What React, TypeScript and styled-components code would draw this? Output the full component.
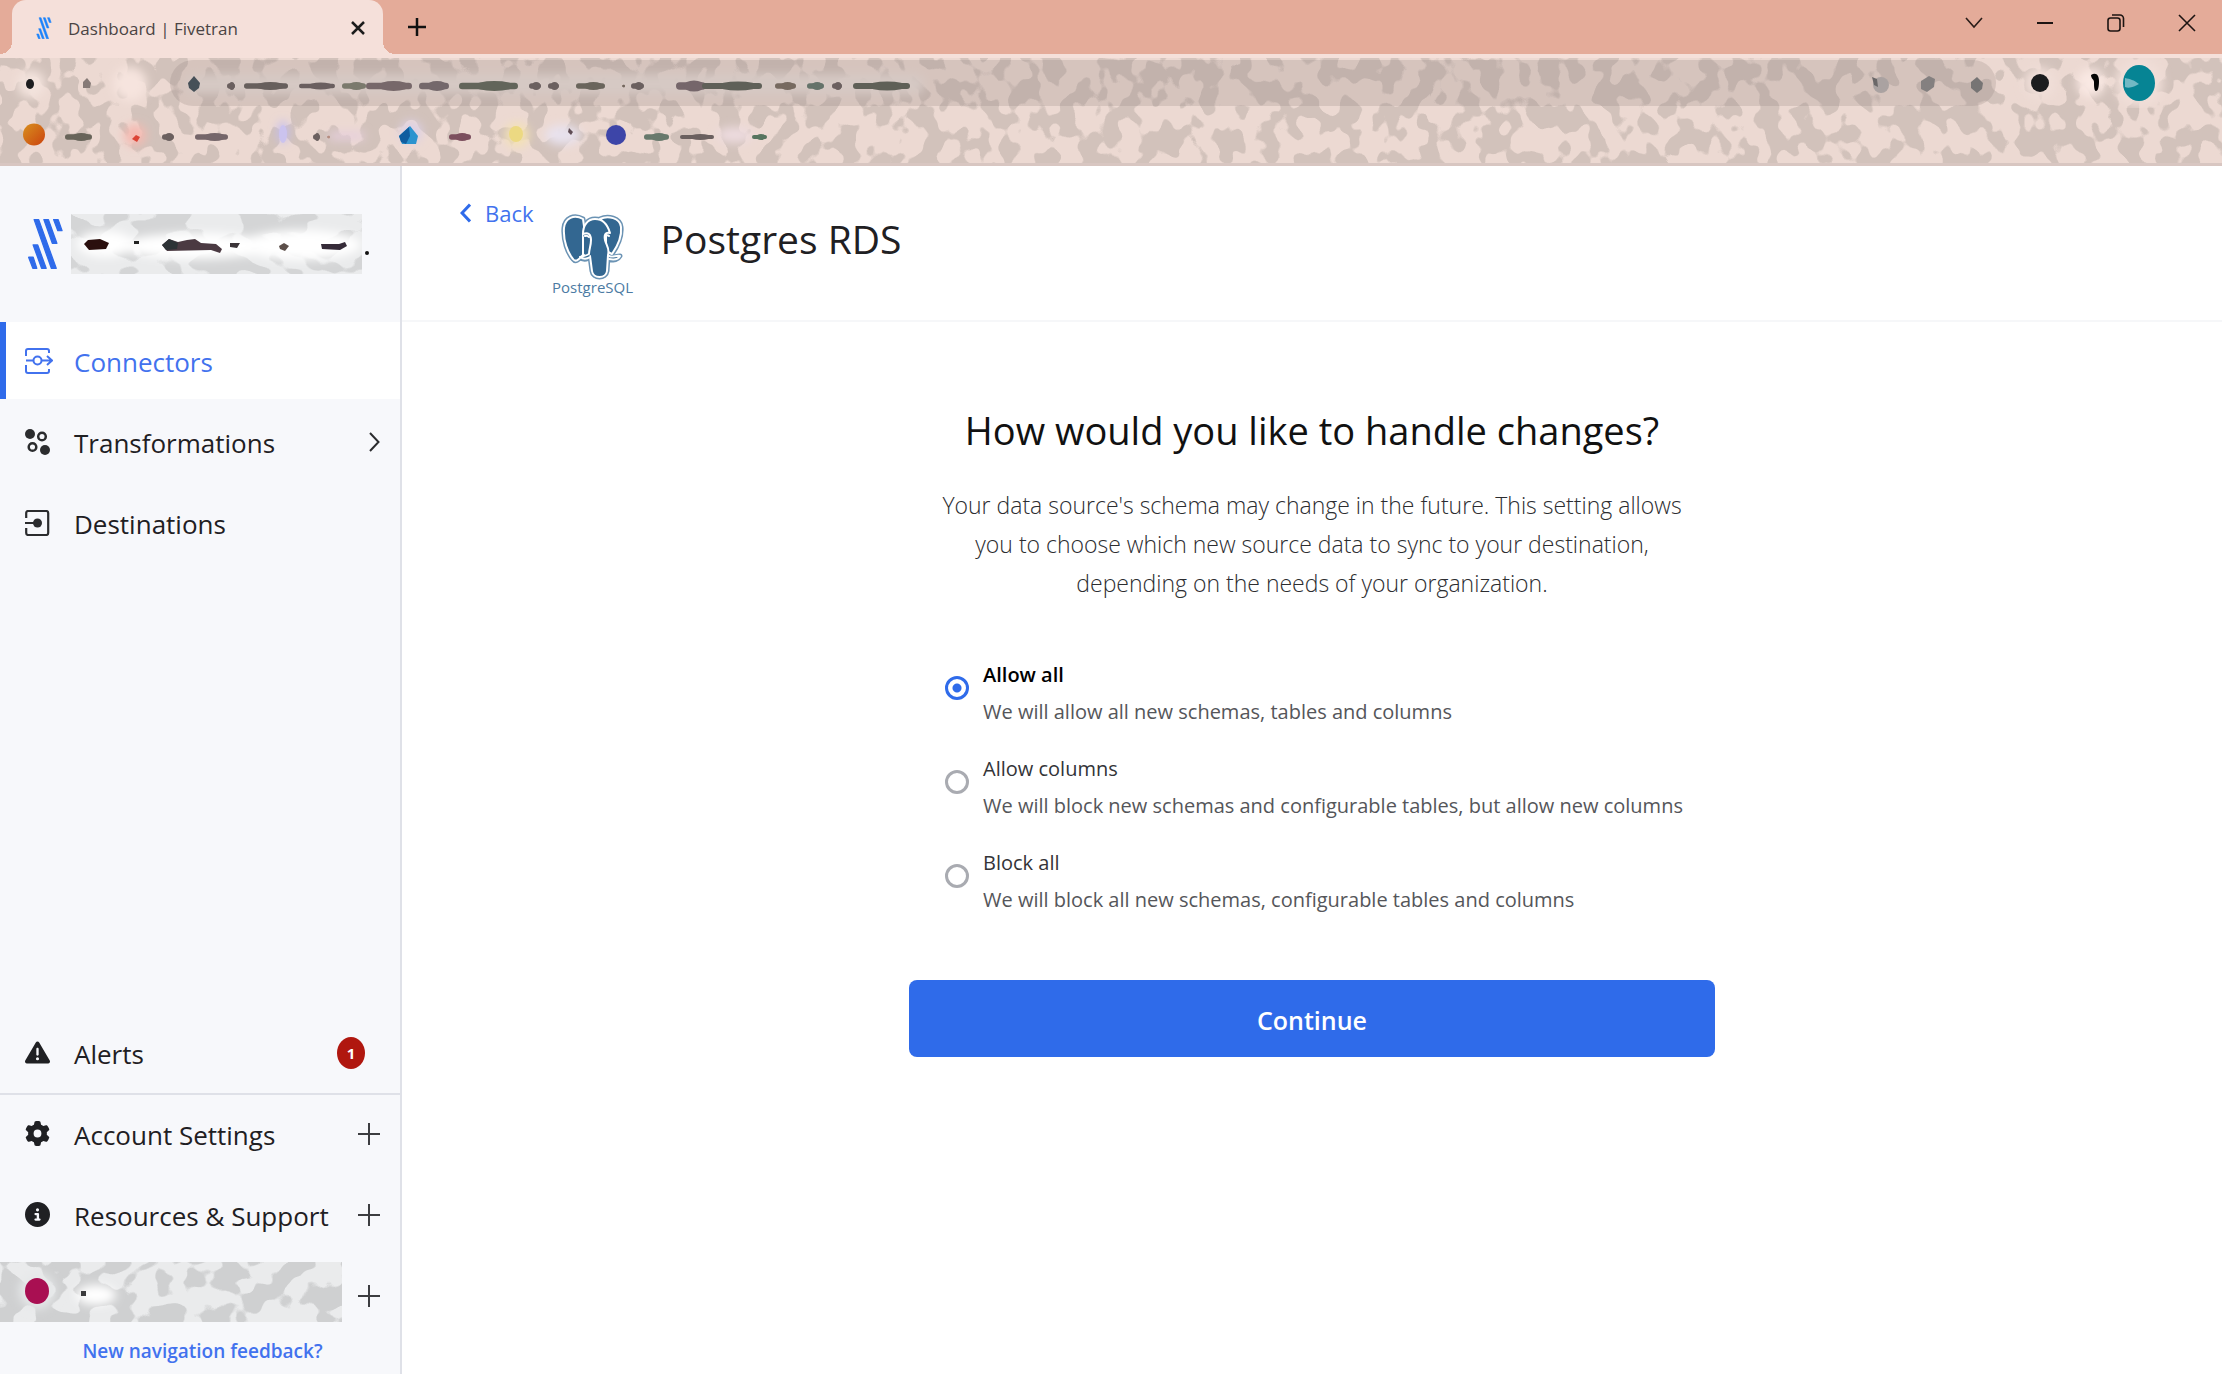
import React, { useState } from 'react';
import styled, { createGlobalStyle } from 'styled-components';
import { FaCircleInfo, FaGear, FaTriangleExclamation } from 'react-icons/fa6';

const color = {
  blue: '#2f6bea',
  link: '#4272ee',
  ink: '#1f2023',
  text: '#55565a',
  side: '#f7f8fb',
  line: '#dfe1e8',
  frame: '#e4ab99',
  tab: '#f5e0da',
};

const GlobalStyle = createGlobalStyle`
  *, *::before, *::after { box-sizing: border-box; }
  body {
    margin: 0;
    background: #fff;
    color: ${color.ink};
    font-family: "Open Sans", "Noto Sans", sans-serif;
  }
  button, input { font: inherit; }
  button { border: 0; background: none; padding: 0; color: inherit; cursor: pointer; }
  a { text-decoration: none; }
  svg { display: block; flex: none; }
`;

const Window = styled.div`
  display: flex;
  flex-direction: column;
  min-height: 100vh;
`;

/* ---------- browser frame ---------- */

const TabStrip = styled.div`
  display: flex;
  height: 58px;
  padding-left: 12px;
  background: ${color.frame};
  border-bottom: 4px solid ${color.tab};
`;

const Tab = styled.div`
  position: relative;
  display: flex;
  align-items: center;
  width: 371px;
  padding: 2px 16px 0 24px;
  gap: 16px;
  border-radius: 14px 14px 0 0;
  background: ${color.tab};
  color: #4a4444;
  font-size: 17px;

  &::before, &::after {
    content: "";
    position: absolute;
    bottom: 0;
    width: 12px;
    height: 12px;
  }
  &::before {
    right: 100%;
    background: radial-gradient(circle at 0 0, transparent 12px, ${color.tab} 12px);
  }
  &::after {
    left: 100%;
    background: radial-gradient(circle at 100% 0, transparent 12px, ${color.tab} 12px);
  }
`;

const TabTitle = styled.span`
  flex: 1;
`;

const IconButton = styled.button`
  display: grid;
  place-items: center;
  width: 18px;
`;

const NewTab = styled(IconButton)`
  width: 68px;
`;

const Controls = styled.div`
  display: flex;
  height: 46px;
  margin-left: auto;
`;

const Control = styled(IconButton)`
  width: 71px;
`;

const Toolbar = styled.div`
  position: relative;
  height: 108px;
  background: #ecd9d2;
  border-bottom: 3px solid #d8c6c1;
  overflow: hidden;
`;

const NoiseLayer = styled.svg`
  position: absolute;
  inset: 0;
  width: 100%;
  height: 100%;
`;

const AddressRow = styled.div`
  position: relative;
  display: flex;
  height: 50px;
`;

const Pill = styled.div`
  position: relative;
  display: flex;
  flex: 1;
  justify-content: space-between;
  margin: 2px 0;
  border-radius: 23px;
  background: rgba(150, 135, 132, 0.26);
  overflow: hidden;
`;

const BookmarkRow = styled.div`
  position: relative;
  height: 55px;
`;

/* ---------- application ---------- */

const Shell = styled.div`
  display: flex;
  flex: 1;
`;

const Sidebar = styled.aside`
  display: flex;
  flex-direction: column;
  flex: none;
  width: 402px;
  padding-bottom: 6px;
  background: ${color.side};
  border-right: 2px solid ${color.line};
`;

const Brand = styled.div`
  display: flex;
  align-items: center;
  gap: 7px;
  height: 156px;
  padding-left: 27px;
`;

const Redacted = styled.div`
  position: relative;
  width: ${(p: { $w: number }) => p.$w}px;
  height: 60px;
  flex: none;
  background: #eaebec;
  overflow: hidden;
`;

const Trailing = styled.span`
  width: 4px;
  height: 4px;
  margin-top: 18px;
  margin-left: -4px;
  border-radius: 2px;
  background: #111;
`;

const NavList = styled.nav`
  display: flex;
  flex-direction: column;
  gap: 4px;
`;

const LowerNav = styled(NavList)`
  margin-top: auto;
`;

const Divider = styled.hr`
  width: 100%;
  height: 2px;
  margin: -2px 0 -4px;
  border: 0;
  background: ${color.line};
`;

const NavItem = styled.a<{ $active?: boolean }>`
  display: flex;
  align-items: center;
  gap: 21px;
  height: 77px;
  padding: 0 20px 0 19px;
  border-left: 6px solid ${p => (p.$active ? color.blue : 'transparent')};
  background: ${p => (p.$active ? '#fff' : 'transparent')};
  color: ${p => (p.$active ? color.link : color.ink)};
  font-size: 26px;
  line-height: 36px;
`;

const NavIcon = styled.span`
  display: grid;
  align-items: center;
  width: 28px;
  flex: none;
`;

const NavLabel = styled.span`
  flex: 1;
  padding-top: 2px;
  white-space: nowrap;
`;

const Badge = styled.span`
  display: grid;
  place-items: center;
  width: 28px;
  height: 32px;
  margin-right: 15px;
  border-radius: 50%;
  background: #b0170f;
  color: #fff;
  font-size: 15px;
  font-weight: 700;
  line-height: 20px;
`;

const UserItem = styled.a`
  display: flex;
  align-items: center;
  justify-content: space-between;
  height: 77px;
  padding-right: 20px;
  color: ${color.ink};

  & > ${Redacted} {
    margin-bottom: 8px;
  }
`;

const Feedback = styled.a`
  display: block;
  line-height: 34px;
  padding-left: 5px;
  color: ${color.link};
  font-size: 19px;
  font-weight: 600;
  text-align: center;
`;

const Main = styled.main`
  flex: 1;
`;

const PageHeader = styled.header`
  display: flex;
  align-items: flex-start;
  gap: 19px;
  height: 156px;
  padding: 32px 60px 0 58px;
  border-bottom: 2px solid #f6f7f9;
`;

const Back = styled.a`
  display: flex;
  align-items: center;
  gap: 14px;
  color: ${color.link};
  font-size: 22px;
  line-height: 30px;
`;

const Identity = styled.div`
  display: flex;
  align-items: flex-start;
  gap: 28px;
  padding-top: 15px;
`;

const SourceLogo = styled.figure`
  display: flex;
  flex-direction: column;
  align-items: center;
  width: 80px;
  margin: 0;
`;

const LogoName = styled.figcaption`
  color: #4c7ba3;
  font-size: 15px;
  line-height: 12px;
`;

const Title = styled.h1`
  margin: 0;
  font-size: 39px;
  font-weight: 400;
  line-height: 52px;
`;

const Form = styled.form`
  display: flex;
  flex-direction: column;
  width: 806px;
  max-width: 100%;
  margin: 0 auto;
  padding: 82px 0 48px;
`;

const Heading = styled.h2`
  margin: 0 0 30px;
  color: #111;
  font-size: 38px;
  font-weight: 500;
  line-height: 52px;
  text-align: center;
`;

const Intro = styled.p`
  margin: 0 16px 53px;
  color: #2c2d30;
  font-size: 23px;
  font-weight: 300;
  line-height: 39px;
  text-align: center;
`;

const Options = styled.fieldset`
  display: flex;
  flex-direction: column;
  gap: 20px;
  margin: 0 0 62px;
  padding: 0 0 0 36px;
  border: 0;
`;

const Option = styled.label`
  display: flex;
  align-items: flex-start;
  gap: 14px;
  cursor: pointer;
`;

const Radio = styled.input`
  appearance: none;
  flex: none;
  width: 24px;
  height: 24px;
  margin: 20px 0 0;
  border: 3px solid #a9abb1;
  border-radius: 50%;
  background: #fff;

  &:checked {
    border-color: ${color.blue};
    background: radial-gradient(circle, ${color.blue} 4px, #fff 5px);
  }
`;

const OptionText = styled.span`
  display: flex;
  flex-direction: column;
  font-size: 20px;
  line-height: 37px;
`;

const OptionName = styled.span<{ $on: boolean }>`
  color: ${p => (p.$on ? '#000' : '#333438')};
  font-weight: ${p => (p.$on ? 600 : 400)};
`;

const OptionNote = styled.span`
  color: ${color.text};
`;

const Continue = styled.button`
  height: 77px;
  padding-top: 3px;
  border-radius: 8px;
  background: ${color.blue};
  color: #fff;
  font-size: 25px;
  font-weight: 600;
`;

/* ---------- drawings ---------- */

function Noise({ id, rgb, freq, seed, bias }: { id: string; rgb: number[]; freq: string; seed: number; bias: number }) {
  const [r, g, b] = rgb.map(v => (v / 255).toFixed(3));
  return (
    <NoiseLayer aria-hidden="true">
      <filter id={id} x="0" y="0" width="100%" height="100%" colorInterpolationFilters="sRGB">
        <feTurbulence type="fractalNoise" baseFrequency={freq} numOctaves={2} seed={seed} />
        <feColorMatrix values={`0 0 0 0 ${r}  0 0 0 0 ${g}  0 0 0 0 ${b}  24 0 0 0 ${bias}`} />
      </filter>
      <rect width="100%" height="100%" filter={`url(#${id})`} />
    </NoiseLayer>
  );
}

type Mark = [x: number, width: number, fill?: string, height?: number];

function Smudges({ marks, y }: { marks: Mark[]; y: number }) {
  return (
    <>
      {marks.map(([x, w, fill = '#6b605f', h = 8]) => (
        <g key={x} fill={fill}>
          <rect x={x} y={y - h / 3} width={w} height={(h * 2) / 3} rx={h / 3} />
          <ellipse cx={x + w * 0.6} cy={y} rx={w * 0.34} ry={h / 2} />
        </g>
      ))}
    </>
  );
}

function Glow({ id, children }: { id: string; children: React.ReactNode }) {
  return (
    <>
      <filter id={id} x="-50%" y="-50%" width="200%" height="200%">
        <feGaussianBlur stdDeviation="5" />
      </filter>
      <g filter={`url(#${id})`}>{children}</g>
    </>
  );
}

const urlMarks: Mark[] = [
  [57, 8], [74, 44, '#675f5c'], [129, 36, '#6a5f5f', 7], [172, 24, '#7b7a6d'], [196, 46, '#77686a', 10],
  [249, 30, '#74686b', 10], [289, 59, '#62655a', 10], [359, 12], [378, 11], [406, 29, '#6a655c'],
  [452, 3, '#74685f', 3], [461, 13], [506, 30, '#75666a', 11], [532, 60, '#5f6058', 9], [605, 21, '#776a60'],
  [637, 17, '#65736a'], [662, 10], [683, 57, '#5f6057', 9],
];

const bookmarkMarks: Mark[] = [
  [65, 27, '#68645a'], [162, 12], [195, 33, '#75666a'], [313, 7], [327, 3, '#b58d80', 3], [449, 22, '#7c4f5e'],
  [644, 25, '#68796c'], [680, 34, '#6a605f', 6], [752, 15, '#56745f', 6],
];

const Stripes = ({ width, fill }: { width: number; fill: string }) => (
  <svg width={width} viewBox="80 155 114 160" fill={fill} stroke={fill} strokeWidth="4" strokeLinejoin="round" aria-hidden="true">
    <path d="M102 160h14l54 150h-15zM132 160h14l26 73h-14zM162 160h14l12 34h-13zM99 238h14l26 72h-14zM85 276h14l11 34h-12z" />
  </svg>
);

const Plus = () => (
  <svg width="22" height="22" viewBox="0 0 22 22" stroke="#3c3d40" strokeWidth="2" aria-hidden="true">
    <path d="M11 0v22M0 11h22" />
  </svg>
);

const Elephant = () => {
  const shapes = [
    'M43 18C34 13 25 17 24 27c-1 13 4 25 9 31 3 4 6 0 10-4l2-22z',
    'M60 18c8-4 20-1 21 8 1 10-4 20-9 27l-6-3V24z',
    'M43 33C43 24 48 18 55 18c9 0 13 7 15 14-5-1-6 2-5 7 1 5 5 8 3 15l-1 16c-1 8-14 8-15 0l-2-15c-3 1-6 0-7-2z',
  ];
  return (
    <svg width="64" height="68" viewBox="21 12 64 68" strokeLinejoin="round" strokeLinecap="round" aria-hidden="true">
      <g fill="#336791" stroke="#6b93b4" strokeWidth="5">
        {shapes.map(d => <path key={d} d={d} />)}
        <path d="M39 56c4 3 8 3 12-1M69 56c4 1 7-1 11-1-2 4-6 4-11 4" />
      </g>
      <g fill="#336791" stroke="#fff" strokeWidth="2">
        {shapes.map(d => <path key={d} d={d} />)}
        <path d="M43 33c5-2 8 0 8 6s-2 9-2 14c-3 2-6 2-9 3 3 2 7 2 10 0" />
        <path d="M69 55c4 2 7-1 11 0-2 4-6 4-11 3" />
        <path d="M45 35c2-1 3 0 4 1M66 35c1-1 2-1 3 0" fill="none" />
      </g>
    </svg>
  );
};

const ConnectorsIcon = () => (
  <svg width="28" height="26" viewBox="0 0 28 26" fill="none" stroke="currentColor" strokeWidth="2" aria-hidden="true">
    <path d="M1 8V3a2 2 0 0 1 2-2h19a2 2 0 0 1 2 2v2M1 17v6a2 2 0 0 0 2 2h19a2 2 0 0 0 2-2v-2M1 12.500h7M17 12.500h10M22 8l5 4.500-5 4.500" />
    <circle cx="12.500" cy="12.500" r="4" />
  </svg>
);

const TransformationsIcon = () => (
  <svg width="25" height="26" viewBox="0 0 25 26" fill="#2b2c2e" aria-hidden="true">
    <circle cx="5" cy="5" r="5" />
    <circle cx="20" cy="21" r="5" />
    <g fill="none" stroke="#2b2c2e" strokeWidth="2.500">
      <circle cx="17" cy="7.500" r="3.800" />
      <circle cx="7.500" cy="18" r="3.800" />
    </g>
  </svg>
);

const DestinationsIcon = () => (
  <svg width="25" height="26" viewBox="0 0 25 26" fill="none" stroke="#2b2c2e" strokeWidth="2.200" aria-hidden="true">
    <path d="M1.200 8V3a2 2 0 0 1 2-2h18a2 2 0 0 1 2 2v20a2 2 0 0 1-2 2h-18a2 2 0 0 1-2-2v-5M0 13h9" />
    <circle cx="12.500" cy="13" r="4.500" fill="#2b2c2e" stroke="none" />
  </svg>
);

/* ---------- page ---------- */

const options = [
  { id: 'all', name: 'Allow all', note: 'We will allow all new schemas, tables and columns' },
  { id: 'columns', name: 'Allow columns', note: 'We will block new schemas and configurable tables, but allow new columns' },
  { id: 'block', name: 'Block all', note: 'We will block all new schemas, configurable tables and columns' },
];

function BrowserFrame() {
  return (
    <>
      <TabStrip>
        <Tab>
          <Stripes width={16} fill="#1c83fb" />
          <TabTitle>Dashboard | Fivetran</TabTitle>
          <IconButton aria-label="Close tab">
            <svg width="14" height="14" viewBox="0 0 14 14" stroke="#1c1c1c" strokeWidth="2.500"><path d="M1 1l12 12M13 1L1 13" /></svg>
          </IconButton>
        </Tab>
        <NewTab aria-label="New tab">
          <svg width="18" height="18" viewBox="0 0 18 18" stroke="#111" strokeWidth="2.500"><path d="M9 0v18M0 9h18" /></svg>
        </NewTab>
        <Controls>
          <Control aria-label="Search tabs">
            <svg width="18" height="12" viewBox="0 0 18 12" fill="none" stroke="#2a1d19" strokeWidth="1.600"><path d="M1 1l8 9 8-9" /></svg>
          </Control>
          <Control aria-label="Minimize">
            <svg width="16" height="2" viewBox="0 0 16 2"><path d="M0 0h16v2H0z" fill="#1c1412" /></svg>
          </Control>
          <Control aria-label="Restore">
            <svg width="18" height="18" viewBox="0 0 18 18" fill="none" stroke="#1c1412" strokeWidth="1.600">
              <rect x="1" y="4" width="12" height="13" rx="2.500" />
              <path d="M5 1h8a3.500 3.500 0 0 1 3.500 3.500V13" />
            </svg>
          </Control>
          <Control aria-label="Close window">
            <svg width="18" height="18" viewBox="0 0 18 18" stroke="#1c1412" strokeWidth="1.600"><path d="M1 1l16 16M17 1L1 17" /></svg>
          </Control>
        </Controls>
      </TabStrip>
      <Toolbar>
        <Noise id="toolbar-noise" rgb={[210, 194, 187]} freq="0.05 0.042" seed={7} bias={-11.9} />
        <AddressRow>
          <svg width="170" height="50" aria-hidden="true">
            <Glow id="glow-nav">
              <circle cx="31" cy="26" r="14" fill="#f3e3dd" />
              <circle cx="130" cy="26" r="17" fill="#f6e4de" />
            </Glow>
            <ellipse cx="30" cy="26" rx="4" ry="5" fill="#1d1d1f" />
            <path d="M83 30v-6l4-4 4 5-1 5z" fill="#867a77" />
          </svg>
          <Pill>
            <svg width="760" height="46" aria-hidden="true">
              <Glow id="glow-url">
                <rect x="15" y="14" width="740" height="20" rx="10" fill="#d6c9c4" />
              </Glow>
              <path d="M24 16l6 7-1 5-5 4-5-4-1-5z" fill="#465058" />
              <Smudges marks={urlMarks} y={26} />
            </svg>
            <svg width="140" height="46" aria-hidden="true">
              <ellipse cx="25" cy="25" rx="8" ry="8" fill="#aaa2a1" />
              <path d="M16 17l5 2 1 8-4-2z" fill="#6a6768" />
              <path d="M65 21l8-5 6 3-1 8-7 5-6-3z" fill="#848080" />
              <path d="M121 17l6 6-1 6-5 4-6-5v-6z" fill="#767474" />
            </svg>
          </Pill>
          <svg width="226" height="50" aria-hidden="true">
            <Glow id="glow-actions">
              <circle cx="44" cy="25" r="16" fill="#f0ded8" />
              <circle cx="95" cy="25" r="14" fill="#f9e8e3" />
              <circle cx="143" cy="25" r="24" fill="#f0ded8" />
            </Glow>
            <ellipse cx="44" cy="25" rx="9" ry="9" fill="#1b1c1e" />
            <path d="M95 17c5-3 8 0 8 6s-1 10-3 10-2-6-2-9-3-3-3-7z" fill="#050505" />
            <ellipse cx="143" cy="25" rx="16" ry="18" fill="#068494" />
            <path d="M129 20c5 1 9 2 14 6-4 2-9 5-14 3z" fill="#72b9c4" />
          </svg>
        </AddressRow>
        <BookmarkRow>
          <svg width="800" height="55" aria-hidden="true">
            <defs>
              <linearGradient id="orange" x1="0" y1="0" x2="1" y2="1">
                <stop offset="0" stopColor="#d8901f" /><stop offset="1" stopColor="#cb430f" />
              </linearGradient>
            </defs>
            <Glow id="glow-marks">
              <circle cx="135" cy="27" r="11" fill="#f5b9b1" />
              <ellipse cx="283" cy="24" rx="5" ry="11" fill="#c1bbf2" />
              <rect x="330" y="24" width="34" height="8" fill="#e6cfdd" />
              <circle cx="411" cy="24" r="11" fill="#dcd0e6" />
              <circle cx="517" cy="27" r="12" fill="#f4e2b4" />
              <ellipse cx="563" cy="27" rx="18" ry="10" fill="#e8e2ee" />
              <ellipse cx="735" cy="27" rx="18" ry="8" fill="#eddbdf" />
            </Glow>
            <circle cx="34" cy="26.500" r="11" fill="url(#orange)" />
            <path d="M132 31l4-4 4 2-3 5z" fill="#dc4436" />
            <path d="M410 18l8 10-2 8h-14l-3-8z" fill="#2b93cf" />
            <path d="M409 19l1 9-4 8-5-2-2-6z" fill="#115d9f" />
            <ellipse cx="283" cy="26" rx="4" ry="9" fill="#cbc3ee" />
            <ellipse cx="516" cy="26" rx="7" ry="8" fill="#ecd982" />
            <path d="M569 20l4 4-2 3-3-3z" fill="#5f4d55" />
            <circle cx="616" cy="27" r="10" fill="#3d45a8" />
            <Smudges marks={bookmarkMarks} y={29} />
          </svg>
        </BookmarkRow>
      </Toolbar>
    </>
  );
}

function SideNavigation() {
  return (
    <Sidebar>
      <Brand>
        <Stripes width={37} fill={color.blue} />
        <Redacted $w={291}>
          <Noise id="brand-noise" rgb={[212, 213, 214]} freq="0.03 0.05" seed={12} bias={-12} />
          <NoiseLayer aria-hidden="true">
            <Glow id="glow-brand">
              <ellipse cx="34" cy="30" rx="28" ry="13" fill="#fff" />
              <ellipse cx="125" cy="32" rx="75" ry="13" fill="#fff" />
              <ellipse cx="230" cy="31" rx="60" ry="15" fill="#fff" />
            </Glow>
            <path d="M13 30l4-4 12-1 9 4-3 6-17 1z" fill="#2a0f0d" />
            <path d="M63 27h5v3h-5z" fill="#222" />
            <path d="M91 31l7-6 9 3 9-2 8-1 6 4 15 1 6 5-2 4-9-3-44 1z" fill="#4b3a42" />
            <path d="M91 31l7-6 9 4-1 6-11 1z" fill="#2d3336" />
            <path d="M159 29h10l-3 5-7-1z" fill="#3a3438" />
            <path d="M208 32l5-3 5 3-4 5-5-2z" fill="#5c4f4a" />
            <path d="M250 30h18l6-2 2 4-7 4-18-1z" fill="#352b38" />
          </NoiseLayer>
        </Redacted>
        <Trailing />
      </Brand>
      <NavList aria-label="Primary">
        <NavItem href="#connectors" $active aria-current="page">
          <NavIcon><ConnectorsIcon /></NavIcon>
          <NavLabel>Connectors</NavLabel>
        </NavItem>
        <NavItem href="#transformations">
          <NavIcon><TransformationsIcon /></NavIcon>
          <NavLabel>Transformations</NavLabel>
          <svg width="11" height="20" viewBox="0 0 11 20" fill="none" stroke="#2b2c2e" strokeWidth="2" aria-hidden="true"><path d="M1 1l8.500 9L1 19" /></svg>
        </NavItem>
        <NavItem href="#destinations">
          <NavIcon><DestinationsIcon /></NavIcon>
          <NavLabel>Destinations</NavLabel>
        </NavItem>
      </NavList>
      <LowerNav aria-label="Account">
        <NavItem href="#alerts">
          <NavIcon><FaTriangleExclamation size={25} /></NavIcon>
          <NavLabel>Alerts</NavLabel>
          <Badge>1</Badge>
        </NavItem>
        <Divider />
        <NavItem href="#account">
          <NavIcon><FaGear size={25} /></NavIcon>
          <NavLabel>Account Settings</NavLabel>
          <Plus />
        </NavItem>
        <NavItem href="#resources">
          <NavIcon><FaCircleInfo size={25} /></NavIcon>
          <NavLabel>Resources &amp; Support</NavLabel>
          <Plus />
        </NavItem>
        <UserItem href="#user" aria-label="User menu">
          <Redacted $w={342}>
            <Noise id="user-noise" rgb={[207, 208, 209]} freq="0.038 0.045" seed={3} bias={-11.6} />
            <NoiseLayer aria-hidden="true">
              <Glow id="glow-user">
                <circle cx="37" cy="29" r="18" fill="#e6e8e9" />
                <ellipse cx="96" cy="33" rx="20" ry="10" fill="#fff" />
              </Glow>
              <ellipse cx="37" cy="29" rx="12" ry="13" fill="#a90f52" />
              <path d="M81 29h5v5h-5z" fill="#3a3a3c" />
            </NoiseLayer>
          </Redacted>
          <Plus />
        </UserItem>
      </LowerNav>
      <Feedback href="#feedback">New navigation feedback?</Feedback>
    </Sidebar>
  );
}

export default function App() {
  const [choice, setChoice] = useState('all');
  return (
    <Window>
      <GlobalStyle />
      <BrowserFrame />
      <Shell>
        <SideNavigation />
        <Main>
          <PageHeader>
            <Back href="#back">
              <svg width="11" height="20" viewBox="0 0 11 20" fill="none" stroke={color.blue} strokeWidth="3" aria-hidden="true"><path d="M10 1.500L2 10l8 8.500" /></svg>
              Back
            </Back>
            <Identity>
              <SourceLogo>
                <Elephant />
                <LogoName>PostgreSQL</LogoName>
              </SourceLogo>
              <Title>Postgres RDS</Title>
            </Identity>
          </PageHeader>
          <Form onSubmit={e => e.preventDefault()}>
            <Heading>How would you like to handle changes?</Heading>
            <Intro>
              Your data source's schema may change in the future. This setting allows you to choose which new source
              data to sync to your destination, depending on the needs of your organization.
            </Intro>
            <Options aria-label="Schema change handling">
              {options.map(o => (
                <Option key={o.id} htmlFor={`opt-${o.id}`}>
                  <Radio type="radio" id={`opt-${o.id}`} name="changes" checked={choice === o.id} onChange={() => setChoice(o.id)} />
                  <OptionText>
                    <OptionName $on={choice === o.id}>{o.name}</OptionName>
                    <OptionNote>{o.note}</OptionNote>
                  </OptionText>
                </Option>
              ))}
            </Options>
            <Continue type="submit">Continue</Continue>
          </Form>
        </Main>
      </Shell>
    </Window>
  );
}
